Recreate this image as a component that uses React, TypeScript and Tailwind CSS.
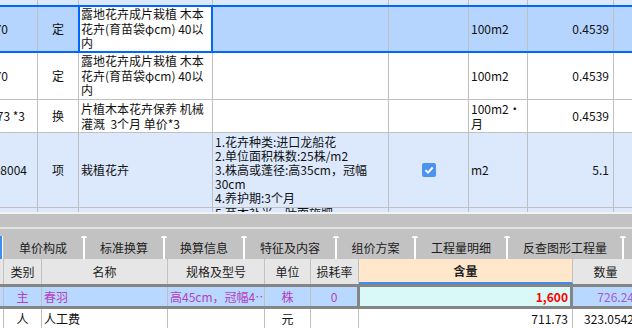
import React from "react";

const cellBase = "shrink-0 h-full border-r border-[#c0c0c0] flex items-center overflow-hidden whitespace-nowrap";

function Sep() {
  return (
    <div className="-mx-[2px] flex h-full w-[6px] shrink-0 flex-col items-center">
      <div className="h-[2px] w-[6px] rounded-t-[2px] bg-white" />
      <div className="w-[2px] flex-1 bg-white" />
    </div>
  );
}

function CheckBox() {
  return (
    <svg width="14" height="14" viewBox="0 0 14 14">
      <rect width="14" height="14" rx="2" fill="#4a94f0" />
      <path d="M3.4 7.1 L6 9.6 L10.7 4.5" stroke="#ffffff" strokeWidth="2" fill="none" />
    </svg>
  );
}

export default function App() {
  return (
    <div className="relative flex h-[328px] w-[632px] flex-col overflow-hidden bg-white text-[12px] text-[#111111] font-['Noto_Sans_CJK_SC',sans-serif]">
      {/* ===== top grid ===== */}
      {/* partial row */}
      <div className="flex h-[5px] shrink-0 bg-[#dce9fd]">
        <div className={`${cellBase} w-[38px]`} />
        <div className={`${cellBase} w-[41px]`} />
        <div className={`${cellBase} w-[134px]`} />
        <div className={`${cellBase} w-[176px] items-start pl-[14px]`}>
          <div className="-mt-[13px] leading-[14px]">满足设计及规范要求</div>
        </div>
        <div className={`${cellBase} w-[80px]`} />
        <div className={`${cellBase} w-[59px]`} />
        <div className={`${cellBase} w-[86px]`} />
        <div className={`${cellBase} w-[40px]`} />
      </div>

      {/* row 1 selected */}
      <div className="flex h-[48px] shrink-0 border-y-2 border-[#0066ff] bg-[#b5d5ff]">
        <div className={`${cellBase} w-[38px] justify-end pr-[29px]`}>4-170</div>
        <div className="flex h-full w-[40px] shrink-0 items-center justify-center">定</div>
        <div className="flex h-full w-[135px] shrink-0 items-center border-x-2 border-[#0066ff] bg-white pl-[1px] leading-[14.5px]">
          <div>
            <div>露地花卉成片栽植 木本</div>
            <div>花卉(育苗袋φcm) 40以</div>
            <div>内</div>
          </div>
        </div>
        <div className={`${cellBase} w-[176px]`} />
        <div className={`${cellBase} w-[80px]`} />
        <div className={`${cellBase} w-[59px] pl-[2px]`}>100m2</div>
        <div className={`${cellBase} w-[86px] justify-end pr-[4px]`}>0.4539</div>
        <div className={`${cellBase} w-[40px]`} />
      </div>

      {/* row 2 */}
      <div className="flex h-[47px] shrink-0 border-b border-[#c0c0c0] bg-white">
        <div className={`${cellBase} w-[38px] justify-end pr-[29px]`}>4-170</div>
        <div className={`${cellBase} w-[41px] justify-center`}>定</div>
        <div className={`${cellBase} w-[134px] pl-[2px] leading-[14.5px]`}>
          <div>
            <div>露地花卉成片栽植 木本</div>
            <div>花卉(育苗袋φcm) 40以</div>
            <div>内</div>
          </div>
        </div>
        <div className={`${cellBase} w-[176px]`} />
        <div className={`${cellBase} w-[80px]`} />
        <div className={`${cellBase} w-[59px] pl-[2px]`}>100m2</div>
        <div className={`${cellBase} w-[86px] justify-end pr-[4px]`}>0.4539</div>
        <div className={`${cellBase} w-[40px]`} />
      </div>

      {/* row 3 */}
      <div className="flex h-[33px] shrink-0 border-b border-[#c0c0c0] bg-white">
        <div className={`${cellBase} w-[38px] justify-end pr-[12px]`}>4-173 *3</div>
        <div className={`${cellBase} w-[41px] justify-center`}>换</div>
        <div className={`${cellBase} w-[134px] pl-[2px] leading-[15px]`}>
          <div>
            <div>片植木本花卉保养 机械</div>
            <div>灌溉 &nbsp;3个月 单价*3</div>
          </div>
        </div>
        <div className={`${cellBase} w-[176px]`} />
        <div className={`${cellBase} w-[80px]`} />
        <div className={`${cellBase} w-[59px] pl-[2px] leading-[15px]`}>
          <div>
            <div>100m2・</div>
            <div>月</div>
          </div>
        </div>
        <div className={`${cellBase} w-[86px] justify-end pr-[4px]`}>0.4539</div>
        <div className={`${cellBase} w-[40px]`} />
      </div>

      {/* row 4 */}
      <div className="flex h-[75px] shrink-0 border-b border-[#c0c0c0] bg-[#dce9fd]">
        <div className={`${cellBase} w-[38px] justify-end pr-[10px]`}>050102008004</div>
        <div className={`${cellBase} w-[41px] justify-center`}>项</div>
        <div className={`${cellBase} w-[134px] pl-[2px]`}>栽植花卉</div>
        <div className={`${cellBase} w-[176px] items-start pl-[2px] pt-[1.5px] leading-[14px]`}>
          <div>
            <div>1.花卉种类:进口龙船花</div>
            <div>2.单位面积株数:25株/m2</div>
            <div>3.株高或蓬径:高35cm，冠幅</div>
            <div>30cm</div>
            <div>4.养护期:3个月</div>
          </div>
        </div>
        <div className={`${cellBase} w-[80px] justify-center`}>
          <CheckBox />
        </div>
        <div className={`${cellBase} w-[59px] pl-[2px]`}>m2</div>
        <div className={`${cellBase} w-[86px] justify-end pr-[4px]`}>5.1</div>
        <div className={`${cellBase} w-[40px]`} />
      </div>

      {/* row 5 partial */}
      <div className="flex h-[4px] shrink-0 bg-[#dce9fd]">
        <div className={`${cellBase} w-[38px]`} />
        <div className={`${cellBase} w-[41px]`} />
        <div className={`${cellBase} w-[134px]`} />
        <div className={`${cellBase} w-[176px] items-start pl-[2px]`}>
          <div className="-mt-[2px] leading-[14px]">5.苗木补光、叶面施肥</div>
        </div>
        <div className={`${cellBase} w-[80px]`} />
        <div className={`${cellBase} w-[59px]`} />
        <div className={`${cellBase} w-[86px]`} />
        <div className={`${cellBase} w-[40px]`} />
      </div>

      {/* ===== splitter ===== */}
      <div className="h-[2px] shrink-0 bg-[#f2f2f2]" />
      <div className="h-[13px] shrink-0 bg-[#c2c2c2]" />
      <div className="h-[2px] shrink-0 bg-[#e2e2e2]" />
      <div className="h-[7px] shrink-0 bg-[#c2c2c2]" />

      {/* ===== tabs ===== */}
      <div className="flex h-[23px] shrink-0 items-stretch bg-[#c2c2c2] text-[#1c1c1c]">
        <div className="w-[2px] shrink-0 bg-[#3d8ef0]" />
        <div className="w-[1px] shrink-0 bg-white" />
        <div className="flex w-[80px] shrink-0 items-center justify-center">单价构成</div>
        <Sep />
        <div className="flex w-[78px] shrink-0 items-center justify-center">标准换算</div>
        <Sep />
        <div className="flex w-[78px] shrink-0 items-center justify-center">换算信息</div>
        <Sep />
        <div className="flex w-[90px] shrink-0 items-center justify-center">特征及内容</div>
        <Sep />
        <div className="flex w-[77px] shrink-0 items-center justify-center">组价方案</div>
        <Sep />
        <div className="flex w-[90px] shrink-0 items-center justify-center">工程量明细</div>
        <Sep />
        <div className="flex w-[114px] shrink-0 items-center justify-center">反查图形工程量</div>
        <Sep />
        <div className="flex w-[60px] shrink-0 items-center justify-center" />
      </div>

      {/* ===== bottom grid header ===== */}
      <div className="flex h-[25px] shrink-0 bg-[#e6e6e6] text-[#202020]">
        <div className={`${cellBase} w-[4px]`} />
        <div className={`${cellBase} w-[38px] justify-center`}>类别</div>
        <div className={`${cellBase} w-[126px] justify-center`}>名称</div>
        <div className={`${cellBase} w-[97px] justify-center`}>规格及型号</div>
        <div className={`${cellBase} w-[46px] justify-center`}>单位</div>
        <div className={`${cellBase} w-[48px] justify-center`}>损耗率</div>
        <div className={`${cellBase} w-[214px] justify-center border-b-2 border-b-[#3d8ef0] bg-[#fee7cb] font-bold`}>含量</div>
        <div className={`${cellBase} w-[66px] justify-center`}>数量</div>
      </div>

      {/* row 主 selected */}
      <div className="flex h-[25px] shrink-0 border-y-[3px] border-[#858585] bg-[#b8d8ff] text-[#b440c4]">
        <div className={`${cellBase} w-[4px]`} />
        <div className={`${cellBase} w-[38px] justify-center`}>主</div>
        <div className={`${cellBase} w-[126px] pl-[2px]`}>春羽</div>
        <div className={`${cellBase} w-[97px] pl-[2px]`}>高45cm，冠幅4…</div>
        <div className={`${cellBase} w-[46px] justify-center`}>株</div>
        <div className="flex h-full w-[46px] shrink-0 items-center justify-center">0</div>
        <div className="flex h-full w-[216px] shrink-0 items-center justify-end border-x-[3px] border-[#858585] bg-[#d9f8f8] pr-[2px] font-bold text-[#ff0000]">1,600</div>
        <div className={`${cellBase} w-[66px] justify-end pr-[4px] text-[#a65bd6]`}>726.24</div>
      </div>

      {/* row 人 */}
      <div className="flex h-[20px] shrink-0 bg-white">
        <div className={`${cellBase} w-[4px]`} />
        <div className={`${cellBase} w-[38px] justify-center`}>人</div>
        <div className={`${cellBase} w-[126px] pl-[2px]`}>人工费</div>
        <div className={`${cellBase} w-[97px]`} />
        <div className={`${cellBase} w-[46px] justify-center`}>元</div>
        <div className={`${cellBase} w-[48px]`} />
        <div className={`${cellBase} w-[214px] justify-end pr-[4px]`}>711.73</div>
        <div className={`${cellBase} w-[66px] justify-end pr-[4px]`}>323.0542</div>
      </div>
    </div>
  );
}
